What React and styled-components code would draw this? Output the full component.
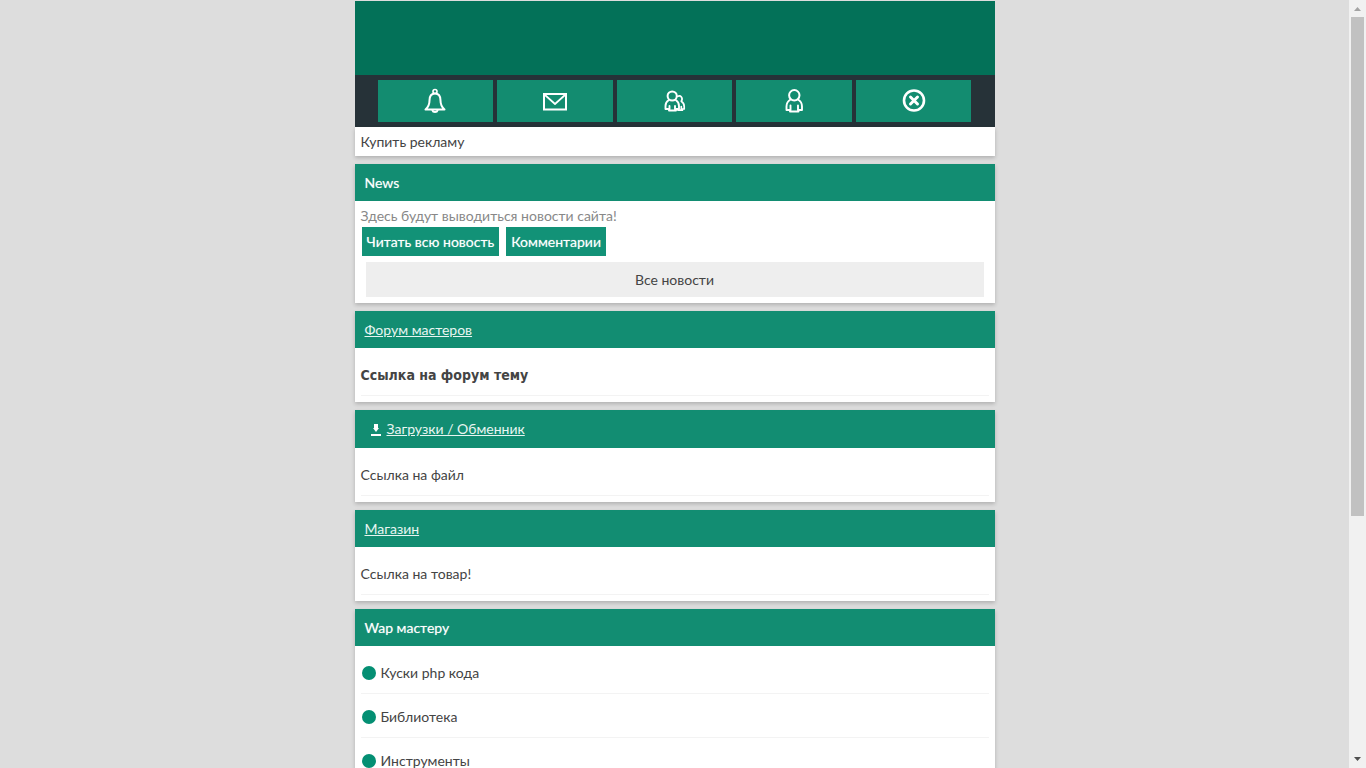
import React from "react";
import styled, { createGlobalStyle, css } from "styled-components";

const GlobalStyle = createGlobalStyle`
  * { box-sizing: border-box; }
  body {
    margin: 0;
    background: #ddd;
    color: #444;
    font: 14px/20px Tahoma, Lato, sans-serif;
  }
  a { color: inherit; text-decoration: none; }
`;

const Shell = styled.div`
  display: flex;
  height: 100vh;
`;

const Scroller = styled.div`
  flex: 1;
  min-width: 0;
  overflow-y: auto;
  scrollbar-width: none;
`;

const Column = styled.div`
  max-width: 640px;
  margin: 0 auto;
  padding-top: 1px;
`;

const Banner = styled.header`
  height: 74px;
  background: #037158;
`;

const Nav = styled.nav`
  display: flex;
  gap: 4px;
  padding: 5px 23px;
  background: #263238;
`;

const NavLink = styled.a`
  display: flex;
  flex: 1;
  align-items: center;
  justify-content: center;
  height: 42px;
  background: #138c70;
  color: #fff;
`;

const NavIcon = styled.svg`
  width: 26px;
  height: 26px;
  fill: none;
  stroke: currentColor;
  stroke-width: 2;
  stroke-linejoin: round;
  stroke-linecap: round;
`;

const Card = styled.section`
  margin-bottom: 8px;
  background: #fff;
  box-shadow: 0 2px 4px rgba(0, 0, 0, 0.2);
`;

const AdLink = styled.a`
  display: block;
  padding: 5px 6px 4px;
`;

const Title = styled.h2`
  display: flex;
  align-items: center;
  gap: 6px;
  min-height: 37px;
  margin: 0;
  padding: 8px 10px;
  background: #128d72;
  color: #fff;
  font-size: 14px;
  font-weight: 400;
  text-shadow: 0 0 1px rgba(255, 255, 255, 0.5);
  ${(p) => p.$linked && css`
    color: #e8f5f1;
    text-shadow: none;
    a { text-decoration: underline; }
  `}
`;

const DownloadIcon = styled.svg`
  width: 10px;
  height: 22px;
  margin-left: 6px;
  fill: #fff;
`;

const News = styled.div`
  padding: 5px 6px 6px;
`;

const NewsText = styled.p`
  margin: 0 0 1px;
  color: #888;
`;

const Actions = styled.div`
  display: flex;
  gap: 7px;
  padding-left: 1px;
`;

const ActionLink = styled.a`
  padding: 5px 5px 4px;
  background: #129277;
  color: #fff;
  text-shadow: 0 0 1px rgba(255, 255, 255, 0.5);
`;

const AllNews = styled.a`
  display: block;
  margin: 6px 5px 0;
  padding: 8px 0 7px;
  background: #eee;
  text-align: center;
`;

const Links = styled.ul`
  margin: 0;
  padding: 4px 6px 6px;
  list-style: none;
`;

const LinkItem = styled.li`
  display: flex;
  align-items: center;
  gap: 5px;
  height: 44px;
  padding-top: 2px;
  border-bottom: 1px solid #f3f3f3;
  ${(p) => p.$strong && css`
    font-family: Tahoma, "DejaVu Sans Condensed", sans-serif;
    font-weight: 700;
  `}
`;

const Bullet = styled.span`
  width: 14px;
  height: 14px;
  margin-left: 1px;
  border-radius: 50%;
  background: #048f73;
`;

const ScrollTrack = styled.div`
  display: flex;
  flex-direction: column;
  justify-content: space-between;
  width: 17px;
  height: 100%;
  background: #f1f1f1;
`;

const ScrollThumb = styled.div`
  flex: 0 0 65%;
  margin: 0 2px auto;
  background: #c1c1c1;
`;

const ScrollArrow = styled.svg`
  flex: none;
  width: 17px;
  height: 17px;
`;

const icons = {
  bell: (
    <>
      <circle cx="13" cy="3.5" r="2" strokeWidth="1.6" />
      <path d="M13 5.5c-4 0-5.5 3-5.5 7 0 4-1 6.5-4 9h19c-3-2.5-4-5-4-9 0-4-1.5-7-5.5-7z" />
      <path d="M10.5 22.5c.5 2 4.500 2 5 0" />
    </>
  ),
  mail: (
    <>
      <path d="M2 6h22v15.500H2z" strokeLinejoin="miter" />
      <path d="M3 7l10 9L23 7" strokeWidth="1.700" />
    </>
  ),
  friends: (
    <>
      <circle cx="11.200" cy="8" r="4.600" />
      <path d="M7.500 12.200C5.500 13.500 4.500 15.500 4.500 18v3H8v1.500h7V21h3v-3c0-2.500-1-4.500-3-5.800M8.500 18v3M14 18v3" strokeWidth="1.900" />
      <path d="M16.800 8.300c2.700-1.500 5.700 1.700 3.500 5 1.900 1.200 2.900 3 2.900 5.200v2.500h-1.800v1.200H17M20.300 18.500V21" strokeWidth="1.700" />
    </>
  ),
  user: (
    <>
      <circle cx="13.300" cy="7.300" r="5.200" />
      <path d="M9.500 11.500C6.700 13.200 5.500 15.500 5.500 18.500V22H9v1.500h8.500V22H21v-3.500c0-3-1.200-5.300-4-7M9.500 17.500V22M17 17.500V22" strokeWidth="1.900" />
    </>
  ),
  close: (
    <>
      <circle cx="13" cy="12.500" r="10" strokeWidth="2.600" />
      <path d="M9.500 9l7 7M16.500 9l-7 7" strokeWidth="3" />
    </>
  ),
};

const navItems = [
  ["bell", "Уведомления"],
  ["mail", "Почта"],
  ["friends", "Друзья"],
  ["user", "Профиль"],
  ["close", "Выход"],
];

const tools = ["Куски php кода", "Библиотека", "Инструменты"];

export default function App() {
  return (
    <Shell>
      <GlobalStyle />
      <Scroller>
        <Column>
          <Banner />
          <Nav>
            {navItems.map(([icon, label]) => (
              <NavLink key={icon} href="#" aria-label={label}>
                <NavIcon viewBox="0 0 26 26" aria-hidden="true">{icons[icon]}</NavIcon>
              </NavLink>
            ))}
          </Nav>
          <Card>
            <AdLink href="#">Купить рекламу</AdLink>
          </Card>
          <Card>
            <Title>News</Title>
            <News>
              <NewsText>Здесь будут выводиться новости сайта!</NewsText>
              <Actions>
                <ActionLink href="#">Читать всю новость</ActionLink>
                <ActionLink href="#">Комментарии</ActionLink>
              </Actions>
              <AllNews href="#">Все новости</AllNews>
            </News>
          </Card>
          <Card>
            <Title $linked><a href="#">Форум мастеров</a></Title>
            <Links>
              <LinkItem $strong><a href="#">Ссылка на форум тему</a></LinkItem>
            </Links>
          </Card>
          <Card>
            <Title $linked>
              <DownloadIcon viewBox="0 0 10 22" aria-hidden="true">
                <path d="M3 6h4v4h1L5 14 2 10h1zM0 16h10v2H0z" />
              </DownloadIcon>
              <a href="#">Загрузки / Обменник</a>
            </Title>
            <Links>
              <LinkItem><a href="#">Ссылка на файл</a></LinkItem>
            </Links>
          </Card>
          <Card>
            <Title $linked><a href="#">Магазин</a></Title>
            <Links>
              <LinkItem><a href="#">Ссылка на товар!</a></LinkItem>
            </Links>
          </Card>
          <Card>
            <Title>Wap мастеру</Title>
            <Links>
              {tools.map((name) => (
                <LinkItem key={name}>
                  <Bullet />
                  <a href="#">{name}</a>
                </LinkItem>
              ))}
            </Links>
          </Card>
        </Column>
      </Scroller>
      <ScrollTrack aria-hidden="true">
        <ScrollArrow viewBox="0 0 17 17"><path d="M5 11h7L8.500 7z" fill="#a3a3a3" /></ScrollArrow>
        <ScrollThumb />
        <ScrollArrow viewBox="0 0 17 17"><path d="M5 6h7L8.500 10z" fill="#505050" /></ScrollArrow>
      </ScrollTrack>
    </Shell>
  );
}
